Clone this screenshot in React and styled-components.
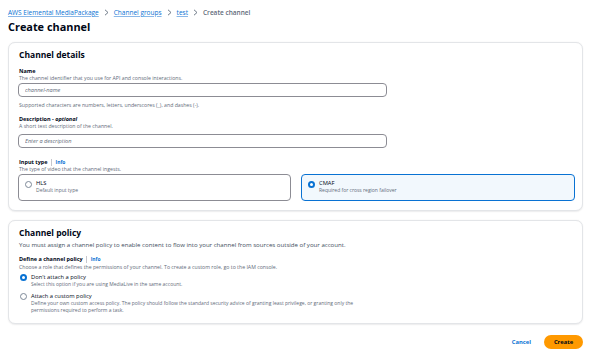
import React from "react";
import styled, { createGlobalStyle, css } from "styled-components";

const Global = createGlobalStyle`
  html, body { margin: 0; padding: 0; background: #ffffff; }
  body { font-family: "Open Sans", "Noto Sans", Arial, sans-serif; color: #000716; }
  * { box-sizing: border-box; }
`;

const Page = styled.div`
  width: 575px;
  margin-left: 8px;
  padding-top: 8px;
  display: flex;
  flex-direction: column;
`;

const Crumbs = styled.nav`
  display: flex;
  align-items: center;
  gap: 5px;
  height: 9px;
  font-size: 6.5px;
  line-height: 9px;
`;

const CrumbLink = styled.a`
  color: #0972d3;
  text-decoration: underline;
  text-decoration-color: #8ab8e8;
  text-underline-offset: 1px;
`;

const CrumbCurrent = styled.span`
  color: #5f6b7a;
  font-weight: 600;
`;

const Chevron = () => (
  <svg width="5" height="7" viewBox="0 0 5 7" aria-hidden="true">
    <path d="M1 0.8 L4 3.5 L1 6.2" fill="none" stroke="#5f6b7a" strokeWidth="0.9" />
  </svg>
);

const Title = styled.h1`
  margin: 2px 0 0;
  font-size: 10.9px;
  line-height: 16px;
  font-weight: 700;
  color: #000716;
`;

const Card = styled.section`
  margin-top: ${(p) => p.$top}px;
  border: 1px solid #e3e5e8;
  border-radius: 7px;
  box-shadow: 0 0.5px 1.5px rgba(0, 7, 22, 0.08);
  padding: ${(p) => p.$pt}px 9px ${(p) => p.$pb}px 9px;
  display: flex;
  flex-direction: column;
  background: #fff;
`;

const CardTitle = styled.h2`
  margin: 0 0 0 1px;
  font-size: 8.5px;
  line-height: 12px;
  font-weight: 700;
`;

const CardDesc = styled.p`
  margin: 1.5px 0 0 1px;
  font-size: 6.1px;
  line-height: 7px;
  color: #414d5c;
`;

const Field = styled.div`
  margin-top: ${(p) => p.$top}px;
  display: flex;
  flex-direction: column;
`;

const LabelRow = styled.div`
  display: flex;
  align-items: center;
  gap: 3px;
  font-size: 5.5px;
  line-height: 7px;
  font-weight: 700;
  margin-left: 1px;
  em { font-weight: 700; }
`;

const InfoLink = styled.a`
  color: #0972d3;
  font-weight: 700;
  font-size: 4.9px;
  padding-left: 4px;
  border-left: 0.8px solid #c6c6cd;
  line-height: 7px;
`;

const Hint = styled.div`
  margin-left: 1px;
  font-size: 5.2px;
  line-height: 6px;
  color: #5f6b7a;
  margin-top: ${(p) => p.$top || 0}px;
`;

const Input = styled.input`
  margin-top: ${(p) => p.$top}px;
  width: 369px;
  height: 14px;
  border: 0.8px solid #8c8c94;
  border-radius: 4px;
  padding: 0 6px;
  font-family: inherit;
  font-size: 5.6px;
  font-style: italic;
  color: #000716;
  outline: none;
  &::placeholder { color: #5f6b7a; font-style: italic; }
`;

const Tiles = styled.div`
  margin-top: 2.5px;
  display: grid;
  grid-template-columns: 273px 274px;
  gap: 10px;
`;

const Tile = styled.label`
  height: 27px;
  border-radius: 4px;
  border: ${(p) => (p.$checked ? "1px solid #0972d3" : "0.8px solid #8c8c94")};
  background: ${(p) => (p.$checked ? "#f2f8fd" : "#fff")};
  padding: 5px 8px 0 6px;
  display: flex;
  gap: 4px;
  align-items: flex-start;
`;

const Radio = styled.span`
  flex: none;
  width: 7px;
  height: 7px;
  border-radius: 50%;
  margin-top: ${(p) => p.$mt || 0}px;
  ${(p) =>
    p.$checked
      ? css`
          border: 2px solid #0972d3;
          background: #fff;
        `
      : css`
          border: 0.8px solid #7d8998;
          background: #fff;
        `}
`;

const OptText = styled.div`
  display: flex;
  flex-direction: column;
`;

const OptLabel = styled.span`
  font-size: 5.8px;
  line-height: 7px;
  color: #000716;
`;

const OptDesc = styled.span`
  font-size: 5px;
  line-height: ${(p) => p.$lh || 7}px;
  color: #5f6b7a;
`;

const RadioList = styled.div`
  display: flex;
  flex-direction: column;
  gap: 4.5px;
  margin-top: 3.5px;
`;

const RadioItem = styled.label`
  display: flex;
  gap: 4px;
  align-items: flex-start;
  margin-left: 2px;
`;

const Actions = styled.div`
  margin-top: 11px;
  display: flex;
  justify-content: flex-end;
  align-items: center;
  gap: 13px;
`;

const Cancel = styled.button`
  border: none;
  background: none;
  padding: 0;
  font-family: inherit;
  font-weight: 700;
  font-size: 5.8px;
  color: #0972d3;
`;

const Primary = styled.button`
  width: 39px;
  height: 14px;
  border: none;
  border-radius: 7px;
  background: #ff9900;
  font-family: inherit;
  font-weight: 700;
  font-size: 5.8px;
  color: #000716;
  padding: 0;
`;

export default function App() {
  return (
    <>
      <Global />
      <Page>
        <Crumbs>
          <CrumbLink>AWS Elemental MediaPackage</CrumbLink>
          <Chevron />
          <CrumbLink>Channel groups</CrumbLink>
          <Chevron />
          <CrumbLink>test</CrumbLink>
          <Chevron />
          <CrumbCurrent>Create channel</CrumbCurrent>
        </Crumbs>
        <Title>Create channel</Title>

        <Card $top={7} $pt={6} $pb={9}>
          <CardTitle>Channel details</CardTitle>
          <Field $top={7}>
            <LabelRow>Name</LabelRow>
            <Hint>The channel identifier that you use for API and console interactions.</Hint>
            <Input $top={2} placeholder="channel-name" />
            <Hint $top={5}>Supported characters are numbers, letters, underscores (_), and dashes (-).</Hint>
          </Field>
          <Field $top={8}>
            <LabelRow>
              <span>
                Description - <em>optional</em>
              </span>
            </LabelRow>
            <Hint>A short text description of the channel.</Hint>
            <Input $top={4.5} placeholder="Enter a description" />
          </Field>
          <Field $top={11}>
            <LabelRow>
              Input type <InfoLink>Info</InfoLink>
            </LabelRow>
            <Hint>The type of video that the channel ingests.</Hint>
            <Tiles>
              <Tile>
                <Radio $mt={0.5} />
                <OptText>
                  <OptLabel>HLS</OptLabel>
                  <OptDesc>Default input type</OptDesc>
                </OptText>
              </Tile>
              <Tile $checked>
                <Radio $checked $mt={0.5} />
                <OptText>
                  <OptLabel>CMAF</OptLabel>
                  <OptDesc>Required for cross region failover</OptDesc>
                </OptText>
              </Tile>
            </Tiles>
          </Field>
        </Card>

        <Card $top={9} $pt={6} $pb={8}>
          <CardTitle>Channel policy</CardTitle>
          <CardDesc>
            You must assign a channel policy to enable content to flow into your channel from sources outside of your account.
          </CardDesc>
          <Field $top={8}>
            <LabelRow>
              Define a channel policy <InfoLink>Info</InfoLink>
            </LabelRow>
            <Hint $top={1.5}>
              Choose a role that defines the permissions of your channel. To create a custom role, go to the IAM console.
            </Hint>
            <RadioList>
              <RadioItem>
                <Radio $checked $mt={0} />
                <OptText>
                  <OptLabel>Don't attach a policy</OptLabel>
                  <OptDesc $lh={7.5}>Select this option if you are using MediaLive in the same account.</OptDesc>
                </OptText>
              </RadioItem>
              <RadioItem>
                <Radio $mt={0} />
                <OptText>
                  <OptLabel>Attach a custom policy</OptLabel>
                  <OptDesc $lh={7.5}>
                    Define your own custom access policy. The policy should follow the standard security advice of granting least privilege, or granting only the
                    <br />
                    permissions required to perform a task.
                  </OptDesc>
                </OptText>
              </RadioItem>
            </RadioList>
          </Field>
        </Card>

        <Actions>
          <Cancel>Cancel</Cancel>
          <Primary>Create</Primary>
        </Actions>
      </Page>
    </>
  );
}
